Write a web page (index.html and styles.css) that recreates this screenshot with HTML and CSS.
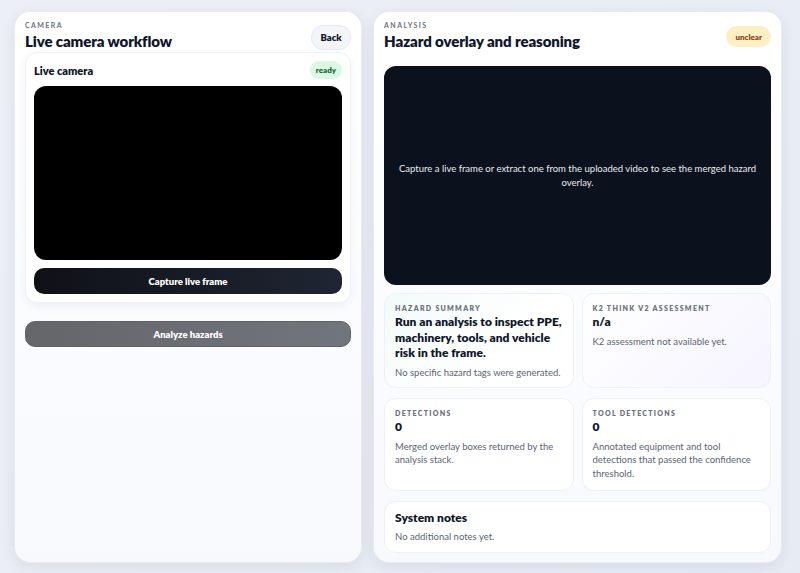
FILE: index.html
```html
<!DOCTYPE html>
<html lang="en">
<head>
<meta charset="utf-8">
<title>Hazard workflow</title>
<link rel="stylesheet" href="styles.css">
</head>
<body>
<div class="page">
  <section class="panel panel-left">
    <header class="panel-head">
      <div>
        <div class="eyebrow">Camera</div>
        <h1 class="title">Live camera workflow</h1>
      </div>
      <button class="btn-back">Back</button>
    </header>
    <div class="cam-card">
      <div class="cam-head">
        <h2 class="cam-title">Live camera</h2>
        <span class="pill pill-ready">ready</span>
      </div>
      <div class="video"></div>
      <button class="btn-capture">Capture live frame</button>
    </div>
    <button class="btn-analyze">Analyze hazards</button>
  </section>

  <section class="panel panel-right">
    <header class="panel-head panel-head-right">
      <div>
        <div class="eyebrow">Analysis</div>
        <h1 class="title">Hazard overlay and reasoning</h1>
      </div>
      <span class="pill pill-unclear">unclear</span>
    </header>
    <div class="overlay">
      <p>Capture a live frame or extract one from the uploaded video to see the merged hazard overlay.</p>
    </div>
    <div class="grid">
      <div class="card card-summary">
        <div class="card-label">Hazard summary</div>
        <div class="card-heading">Run an analysis to inspect PPE, machinery, tools, and vehicle risk in the frame.</div>
        <p class="card-text card-text-gap">No specific hazard tags were generated.</p>
      </div>
      <div class="card card-k2">
        <div class="card-label">K2 Think V2 assessment</div>
        <div class="card-heading">n/a</div>
        <p class="card-text card-text-gap">K2 assessment not available yet.</p>
      </div>
      <div class="card">
        <div class="card-label">Detections</div>
        <div class="card-heading">0</div>
        <p class="card-text card-text-gap">Merged overlay boxes returned by the analysis stack.</p>
      </div>
      <div class="card">
        <div class="card-label">Tool detections</div>
        <div class="card-heading">0</div>
        <p class="card-text card-text-gap">Annotated equipment and tool detections that passed the confidence threshold.</p>
      </div>
      <div class="card card-wide">
        <div class="card-heading card-heading-notes">System notes</div>
        <p class="card-text card-text-notes">No additional notes yet.</p>
      </div>
    </div>
  </section>
</div>
</body>
</html>
```
FILE: styles.css
```css
* { box-sizing: border-box; }
html, body { margin: 0; padding: 0; }
body {
  width: 800px;
  height: 573px;
  overflow: hidden;
  background: linear-gradient(135deg, #eceff6 0%, #e7ebf4 100%);
  font-family: Lato, "Noto Sans", "Liberation Sans", sans-serif;
  color: #0f172a;
}
.page {
  display: flex;
  gap: 11px;
  padding: 11px 18px 10px 14px;
  height: 573px;
}
.panel {
  border-radius: 16px;
  background: linear-gradient(180deg, #ffffff 0%, #f7f9fd 100%);
  box-shadow: 0 4px 14px rgba(30, 41, 70, 0.08);
  border: 1px solid rgba(225, 230, 240, 0.8);
  padding: 9px 10px 9px 10px;
  display: flex;
  flex-direction: column;
}
.panel > * { flex-shrink: 0; }
.panel-left { width: 349px; }
.panel-right { width: 410px; }
.panel-head {
  display: flex;
  justify-content: space-between;
  align-items: center;
}
.panel-head-right { align-items: flex-start; }
.eyebrow {
  font-size: 7px;
  font-weight: 700;
  letter-spacing: 1.4px;
  text-transform: uppercase;
  color: #6b7280;
  line-height: 9px;
}
.title {
  margin: 1px 0 0;
  font-size: 15px;
  font-weight: 800;
  line-height: 20px;
  letter-spacing: -0.1px;
}
.btn-back {
  font-family: inherit;
  font-size: 9.5px;
  font-weight: 800;
  color: #0f172a;
  background: #f3f5fa;
  border: 1px solid #e6eaf2;
  border-radius: 12px;
  height: 25px;
  width: 40px;
  padding: 0;
  margin-top: 2px;
  margin-right: 0;
}
.cam-card {
  margin-top: 1px;
  background: #ffffff;
  border: 1px solid #eef1f6;
  border-radius: 12px;
  box-shadow: 0 4px 10px rgba(30, 41, 70, 0.05);
  padding: 8px 8px 8px 8px;
  display: flex;
  flex-direction: column;
}
.cam-head {
  display: flex;
  justify-content: space-between;
  align-items: center;
  height: 18px;
}
.cam-title {
  margin: 0;
  font-size: 11px;
  font-weight: 800;
}
.pill {
  display: inline-flex;
  align-items: center;
  font-size: 8px;
  font-weight: 800;
  border-radius: 10px;
  padding: 0 6px;
}
.pill-ready {
  height: 18px;
  background: #dcf7e3;
  color: #1f6b3a;
}
.pill-unclear {
  height: 21px;
  padding: 0 9px;
  margin-top: 5px;
  background: #fcefc4;
  color: #8a4a12;
  border-radius: 11px;
}
.video {
  margin-top: 7px;
  height: 174px;
  background: #000;
  border-radius: 12px;
}
.btn-capture {
  margin-top: 8px;
  height: 26px;
  border: none;
  border-radius: 10px;
  background: linear-gradient(90deg, #0f1115 0%, #1f2533 100%);
  color: #ffffff;
  font-family: inherit;
  font-size: 9.5px;
  font-weight: 800;
}
.btn-analyze {
  margin-top: 18px;
  height: 26px;
  border: 1px solid #5f6166;
  border-radius: 10px;
  background: linear-gradient(90deg, #65666a 0%, #71757d 100%);
  color: #ffffff;
  font-family: inherit;
  font-size: 9.5px;
  font-weight: 800;
}
.overlay {
  margin-top: 15px;
  height: 219px;
  background: #0c121d;
  border-radius: 12px;
  display: flex;
  align-items: center;
  justify-content: center;
  padding: 0 12px;
}
.overlay p {
  margin: 0;
  color: #e8ebf1;
  font-size: 9.5px;
  line-height: 14px;
  text-align: center;
}
.grid {
  margin-top: 8px;
  display: grid;
  grid-template-columns: 1fr 1fr;
  grid-template-rows: 95px 93px 52px;
  gap: 10px 8px;
}
.card {
  background: #ffffff;
  border: 1px solid #eef1f6;
  border-radius: 12px;
  padding: 10px 10px 9px;
}
.card-summary {
  background: linear-gradient(135deg, #f2fbf9 0%, #ffffff 60%);
}
.card-k2 {
  background: linear-gradient(135deg, #ffffff 0%, #f6f4fe 100%);
}
.card-wide {
  grid-column: 1 / span 2;
  padding-top: 8px;
}
.card-label {
  font-size: 7px;
  font-weight: 800;
  letter-spacing: 1.3px;
  text-transform: uppercase;
  color: #6b7280;
  line-height: 9px;
}
.card-heading {
  margin-top: 1px;
  font-size: 12px;
  font-weight: 800;
  line-height: 15.5px;
  color: #0f172a;
}
.card-heading-notes { margin-top: 0; }
.card-text {
  margin: 3px 0 0;
  font-size: 9.5px;
  line-height: 13.5px;
  color: #5b6473;
}
.card-text-gap { margin-top: 5px; }
.card-text-notes { margin-top: 4px; }
```
